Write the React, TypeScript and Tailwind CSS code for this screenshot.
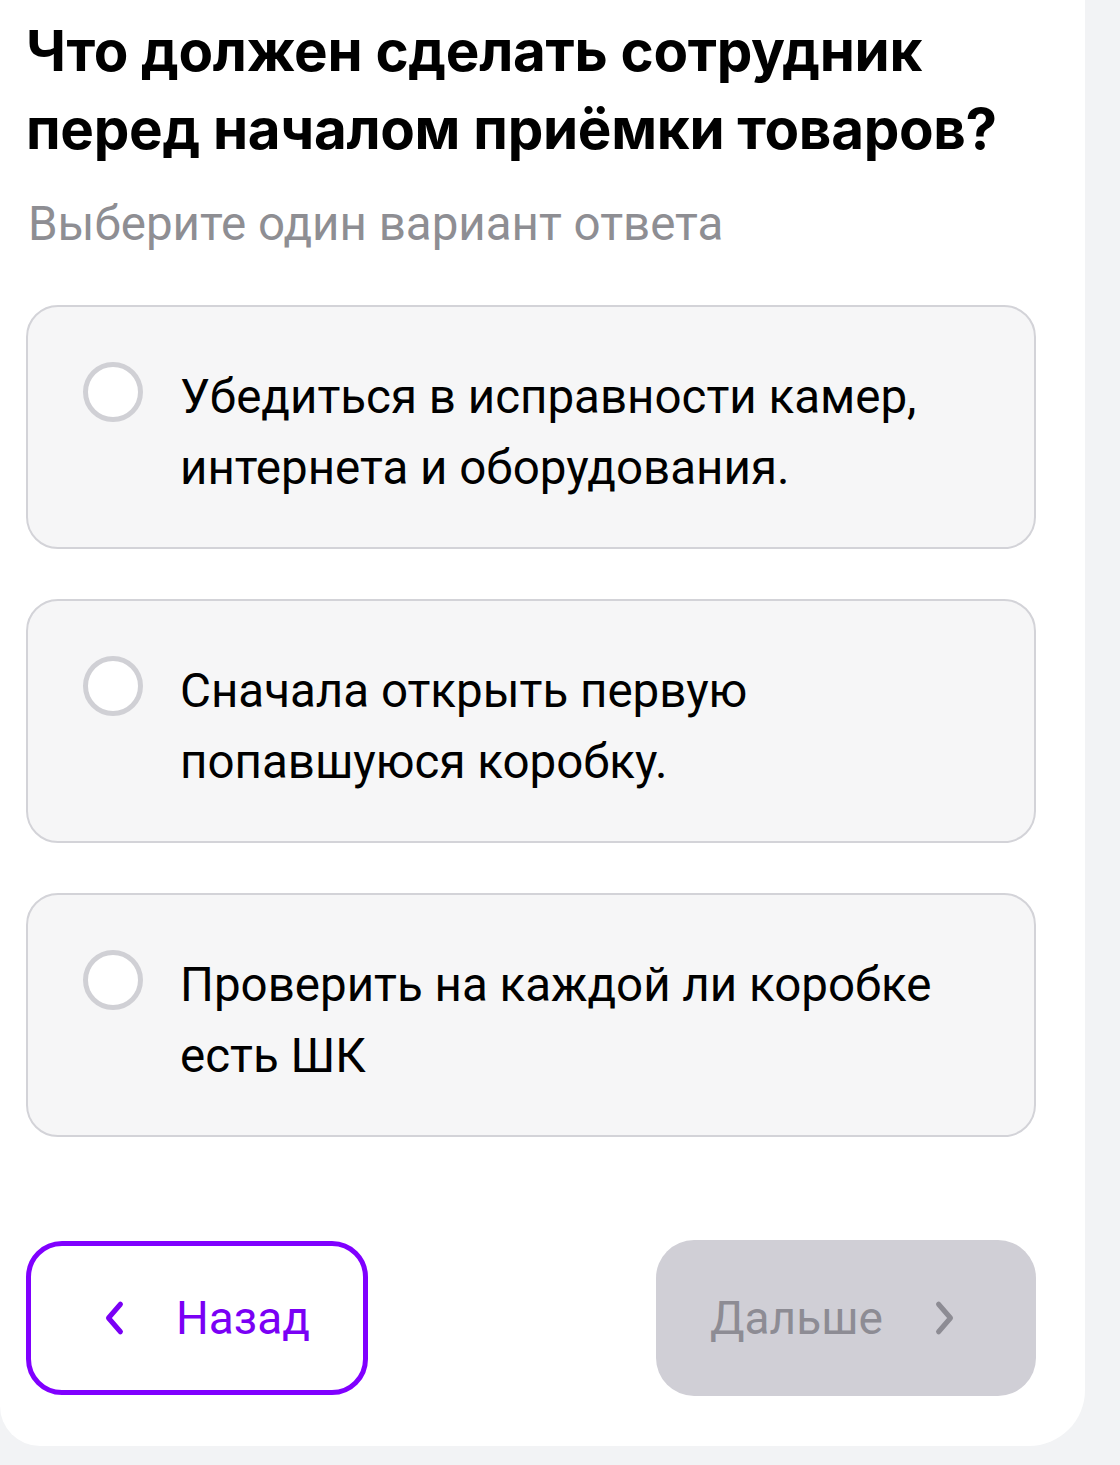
import React from 'react'

const options = [
	['Убедиться в исправности камер,', 'интернета и оборудования.'],
	['Сначала открыть первую', 'попавшуюся коробку.'],
	['Проверить на каждой ли коробке', 'есть ШК'],
]

function Chevron({ dir, className }: { dir: 'left' | 'right'; className: string }) {
	return (
		<svg viewBox="0 0 24 40" className={className} fill="none" stroke="currentColor" strokeWidth="5.5" strokeLinecap="round" strokeLinejoin="round">
			{dir === 'left' ? <path d="M19 5 L6 20 L19 35" /> : <path d="M5 5 L18 20 L5 35" />}
		</svg>
	)
}

export default function App() {
	return (
		<div className="min-h-[1465px] bg-[#f2f3f5]">
			<div className="w-[1085px] bg-white rounded-br-[56px] rounded-bl-[40px] pl-[26px] pr-[49px] pt-[12px] pb-[50px]">
				<h1 className="font-['Inter',sans-serif] font-bold text-[56.5px] leading-[78px] text-black tracking-[-0.3px]">
					Что должен сделать сотрудник
					<br />
					перед началом приёмки товаров?
				</h1>
				<p className="pl-[2px] mt-[26px] font-['Roboto',sans-serif] text-[47.5px] leading-[60px] text-[#8e8e93]">
					Выберите один вариант ответа
				</p>

				<div className="mt-[51px] flex flex-col gap-[50px]">
					{options.map((lines, i) => (
						<div key={i} className="h-[244px] rounded-[32px] border-2 border-[#d3d3d8] bg-[#f6f6f7] flex items-start pl-[55px] pt-[54px]">
							<div className="w-[60px] h-[60px] shrink-0 rounded-full border-[5px] border-[#d0d0d5] bg-white mt-[1px]" />
							<div className="ml-[37px] mt-[1px] font-['Roboto',sans-serif] text-[47.5px] leading-[71px] text-black">
								{lines[0]}
								<br />
								{lines[1]}
							</div>
						</div>
					))}
				</div>

				<div className="mt-[103px] flex justify-between items-center">
					<button className="w-[342px] h-[154px] rounded-[36px] border-[5px] border-[#8000ff] flex items-center justify-start pl-[72px] gap-[51px] text-[#7a00f5]">
						<Chevron dir="left" className="w-[22px] h-[38px]" />
						<span className="font-['Roboto',sans-serif] text-[46px]">Назад</span>
					</button>
					<button className="w-[380px] h-[156px] rounded-[38px] bg-[#d0cfd6] flex items-center justify-start pl-[54px] gap-[51px] text-[#8d8c94]">
						<span className="font-['Roboto',sans-serif] text-[46px]">Дальше</span>
						<Chevron dir="right" className="w-[22px] h-[38px]" />
					</button>
				</div>
			</div>
		</div>
	)
}
